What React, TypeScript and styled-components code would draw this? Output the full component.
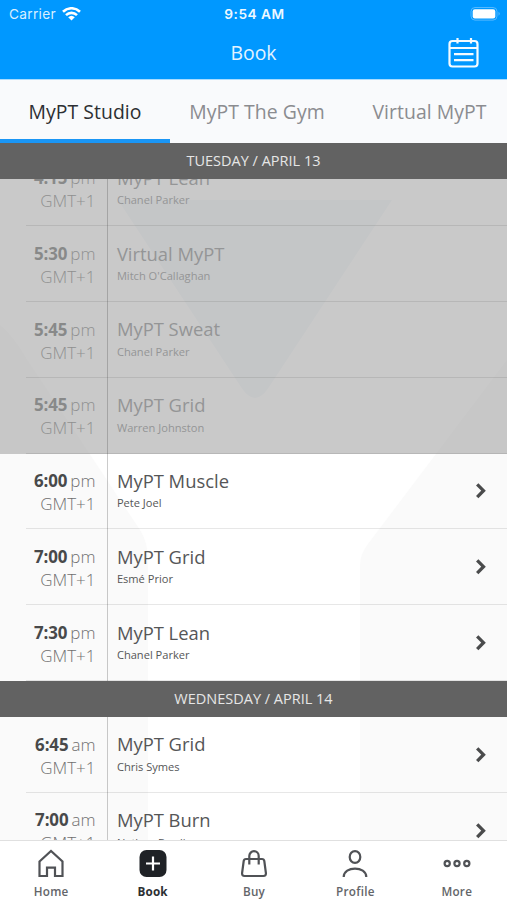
import React from 'react';
import styled, { createGlobalStyle } from 'styled-components';

const GlobalStyle = createGlobalStyle`
  * { box-sizing: border-box; }
  body { margin: 0; background: #fff; }
`;

const Screen = styled.div`
  width: 507px;
  height: 900px;
  display: flex;
  flex-direction: column;
  overflow: hidden;
  background: #fff;
  font-family: 'Open Sans', 'Noto Sans', sans-serif;
`;

const Header = styled.header`
  height: 79px;
  flex: none;
  background: #0098ff;
  color: #fff;
`;

const StatusBar = styled.div`
  height: 28px;
  display: grid;
  grid-template-columns: 1fr auto 1fr;
  align-items: center;
  padding: 0 6px 0 9px;
  font: 400 13.7px/28px Inter, sans-serif;
`;

const Carrier = styled.div`
  display: flex;
  align-items: center;
  gap: 6px;
  height: 28px;
  letter-spacing: 0.3px;
  color: #d8efff;
`;

const Clock = styled.div`
  font-weight: 600;
  letter-spacing: 0.5px;
  margin-left: -1px;
  color: #eef8ff;
`;

const Battery = styled.svg`
  justify-self: end;
`;

const TitleBar = styled.div`
  height: 51px;
  display: grid;
  grid-template-columns: 1fr auto 1fr;
  align-items: center;
  padding: 0 28px;
`;

const Title = styled.h1`
  grid-column: 2;
  margin: -2px 0 0;
  font-size: 19.4px;
  line-height: 50px;
  font-weight: 400;
  color: #e3f3ff;
`;

const CalendarButton = styled.button`
  justify-self: end;
  display: flex;
  margin-top: -3px;
  padding: 0;
  border: 0;
  background: none;
`;

const Tabs = styled.nav`
  height: 64px;
  flex: none;
  display: flex;
  background: #f9fafc;
  border-top: 1px solid #a9dcff;
  overflow: hidden;
`;

const Tab = styled.div<{ $active?: boolean; $width: number }>`
  flex: none;
  width: ${p => p.$width}px;
  height: 63px;
  text-align: center;
  font-size: 19.4px;
  line-height: 63px;
  letter-spacing: 0.05px;
  white-space: nowrap;
  color: ${p => (p.$active ? '#2d2f33' : '#8b8c90')};
  box-shadow: ${p => (p.$active ? 'inset 0 -4px #1a96f5' : 'none')};
`;

const DateBar = styled.div`
  position: relative;
  height: 36px;
  flex: none;
  background: #626262;
  color: #e6e6e6;
  text-align: center;
  font-size: 14.5px;
  line-height: 36px;
`;

const Schedule = styled.main`
  flex: 1;
  min-height: 0;
  overflow: hidden;
  position: relative;
`;

const Watermark = styled.svg`
  position: absolute;
  left: 0;
  top: 0;
`;

const Rows = styled.div<{ $scrolled?: boolean }>`
  position: relative;
  margin-top: ${p => (p.$scrolled ? '-28.6px' : '0')};
`;

const Row = styled.div<{ $past?: boolean }>`
  height: 75.8px;
  display: flex;
  background: ${p => (p.$past ? 'rgba(160,160,160,0.57)' : 'transparent')};
  color: ${p => (p.$past ? '#949596' : '#555657')};
`;

const TimeCell = styled.div`
  width: 107.5px;
  padding: 15.7px 11px 0 0;
  border-right: 1.5px solid rgba(70, 70, 70, 0.28);
  text-align: right;
  font-size: 17px;
  line-height: 23px;
  white-space: nowrap;
`;

const Hour = styled.b<{ $past?: boolean }>`
  font-size: 16.9px;
  font-weight: 700;
  letter-spacing: -0.1px;
  margin-right: 3px;
  color: ${p => (p.$past ? '#888989' : '#48494a')};
`;

const Meridiem = styled.span<{ $past?: boolean }>`
  font-weight: 300;
  color: ${p => (p.$past ? '#8f9090' : '#707070')};
`;

const ClassCell = styled.div`
  flex: 1;
  padding: 14.4px 0 0 9.4px;
`;

const ClassName = styled.div`
  font-size: 18.4px;
  line-height: 26px;
`;

const Trainer = styled.div`
  margin-top: 0.4px;
  font-size: 11.1px;
  line-height: 17px;
`;

const ArrowCell = styled.div`
  width: 40px;
  display: flex;
  align-items: center;
  padding-left: 8px;
`;

const Divider = styled.hr`
  height: 1px;
  margin: -1px 0 0 26px;
  border: 0;
  background: rgba(60, 60, 60, 0.12);
  position: relative;
`;

const TabBar = styled.nav`
  height: 60px;
  flex: none;
  display: grid;
  grid-template-columns: repeat(5, 1fr);
  background: #fff;
  border-top: 1px solid #e0e0e0;
`;

const NavItem = styled.div<{ $active?: boolean }>`
  display: flex;
  flex-direction: column;
  align-items: center;
  padding: 7px 0 0 1px;
  gap: 4px;
  font-size: 11.7px;
  line-height: 18px;
  font-weight: ${p => (p.$active ? 700 : 600)};
  letter-spacing: ${p => (p.$active ? '0.1px' : '0.25px')};
  color: ${p => (p.$active ? '#2c2f33' : '#636569')};
`;

type Session = { time: string; half: string; name: string; trainer: string; past?: boolean };

const tuesday: Session[] = [
  { time: '4:15', half: 'pm', name: 'MyPT Lean', trainer: 'Chanel Parker', past: true },
  { time: '5:30', half: 'pm', name: 'Virtual MyPT', trainer: "Mitch O'Callaghan", past: true },
  { time: '5:45', half: 'pm', name: 'MyPT Sweat', trainer: 'Chanel Parker', past: true },
  { time: '5:45', half: 'pm', name: 'MyPT Grid', trainer: 'Warren Johnston', past: true },
  { time: '6:00', half: 'pm', name: 'MyPT Muscle', trainer: 'Pete Joel' },
  { time: '7:00', half: 'pm', name: 'MyPT Grid', trainer: 'Esmé Prior' },
  { time: '7:30', half: 'pm', name: 'MyPT Lean', trainer: 'Chanel Parker' },
];

const wednesday: Session[] = [
  { time: '6:45', half: 'am', name: 'MyPT Grid', trainer: 'Chris Symes' },
  { time: '7:00', half: 'am', name: 'MyPT Burn', trainer: 'Nathan Bardin' },
];

const Chevron = () => (
  <svg width="14" height="18" viewBox="0 0 14 18" fill="none" stroke="#4a4b4c" strokeWidth="3.3">
    <path d="M2.200 2.300 8.500 8.700 2.200 15.100" />
  </svg>
);

const SessionRow = ({ s }: { s: Session }) => (
  <>
    <Row $past={s.past}>
      <TimeCell>
        <div>
          <Hour $past={s.past}>{s.time}</Hour>
          <Meridiem $past={s.past}>{s.half}</Meridiem>
        </div>
        <Meridiem $past={s.past}>GMT+1</Meridiem>
      </TimeCell>
      <ClassCell>
        <ClassName>{s.name}</ClassName>
        <Trainer>{s.trainer}</Trainer>
      </ClassCell>
      {!s.past && (
        <ArrowCell>
          <Chevron />
        </ArrowCell>
      )}
    </Row>
    <Divider />
  </>
);

const icons = {
  Home: <path d="M2.500 12.500 14 2l11.500 10.500V27h-7.500v-8.300h-8V27H2.500Z" />,
  Book: (
    <>
      <rect x="0.500" y="1" width="27" height="27" rx="7" fill="#1f2226" stroke="none" />
      <path d="M14 7.500v14M7 14.500h14" stroke="#fff" />
    </>
  ),
  Buy: (
    <>
      <path d="M6 10h16q2 0 2.300 2l1.600 12Q26.200 27 23.400 27H4.600Q1.800 27 2.100 24L3.700 12Q4 10 6 10Z" />
      <path d="M9.300 15.500V7a4.700 4.800 0 0 1 9.400 0V15.500" />
    </>
  ),
  Profile: (
    <>
      <ellipse cx="14" cy="8" rx="5.300" ry="5.900" />
      <path d="M2.700 28c0-11.300 22.600-11.300 22.600 0" />
    </>
  ),
  More: (
    <>
      <circle cx="4.200" cy="14.500" r="2.600" />
      <circle cx="14" cy="14.500" r="2.600" />
      <circle cx="23.800" cy="14.500" r="2.600" />
    </>
  ),
};

export default function App() {
  return (
    <>
      <GlobalStyle />
      <Screen>
        <Header>
          <StatusBar>
            <Carrier>
              Carrier
              <svg width="19" height="14" viewBox="0 0 19 14" fill="none" stroke="#fff" strokeWidth="2.600">
                <path d="M1 4.700a12.200 12.200 0 0 1 17 0M4 8.100a8 8 0 0 1 11 0" />
                <path d="M6.200 10.300a4.800 4.800 0 0 1 6.600 0L9.500 13.500Z" fill="#fff" stroke="none" />
              </svg>
            </Carrier>
            <Clock>9:54 AM</Clock>
            <Battery width="31" height="14" viewBox="0 0 31 14">
              <rect x="1" y="0.500" width="26" height="12.600" rx="4" fill="none" stroke="#55b9ff" />
              <rect x="2.700" y="2.200" width="22.600" height="9.200" rx="2.200" fill="#fff" />
              <path d="M28.500 4.800q2.600 2 0 4Z" fill="#55b9ff" />
            </Battery>
          </StatusBar>
          <TitleBar>
            <Title>Book</Title>
            <CalendarButton aria-label="Calendar">
              <svg width="32" height="32" viewBox="0 0 32 32" fill="none" stroke="#f4fbff" strokeWidth="2.200">
                <rect x="2.500" y="5" width="28" height="25.500" rx="3" />
                <path d="M2.500 12h28M10.500 2v5.500M24 2v5.500M7 18.200h19.500M7 24.200h19.500" />
              </svg>
            </CalendarButton>
          </TitleBar>
        </Header>
        <Tabs>
          <Tab $active $width={170}>MyPT Studio</Tab>
          <Tab $width={174}>MyPT The Gym</Tab>
          <Tab $width={171}>Virtual MyPT</Tab>
        </Tabs>
        <DateBar>TUESDAY / APRIL 13</DateBar>
        <Schedule>
          <Watermark width="507" height="661" viewBox="0 179 507 661">
            <path d="M118 200h274L269 387q-14 22-28 0Z" fill="#f4f8fb" />
            <path d="M0 325Q14 337 26 358L140 530Q148 542 148 560V840H0Z" fill="#fafafa" />
            <path d="M507 360 368 544Q360 554 360 566V840H507Z" fill="#fafafa" />
          </Watermark>
          <Rows $scrolled>
            {tuesday.map((s, i) => (
              <SessionRow key={i} s={s} />
            ))}
          </Rows>
          <DateBar>WEDNESDAY / APRIL 14</DateBar>
          <Rows>
            {wednesday.map((s, i) => (
              <SessionRow key={i} s={s} />
            ))}
          </Rows>
        </Schedule>
        <TabBar>
          {(Object.keys(icons) as (keyof typeof icons)[]).map(k => (
            <NavItem key={k} $active={k === 'Book'}>
              <svg width="30" height="30" viewBox="-1 -1 30 30" fill="none" stroke="#505256" strokeWidth="2.200">
                {icons[k]}
              </svg>
              {k}
            </NavItem>
          ))}
        </TabBar>
      </Screen>
    </>
  );
}
